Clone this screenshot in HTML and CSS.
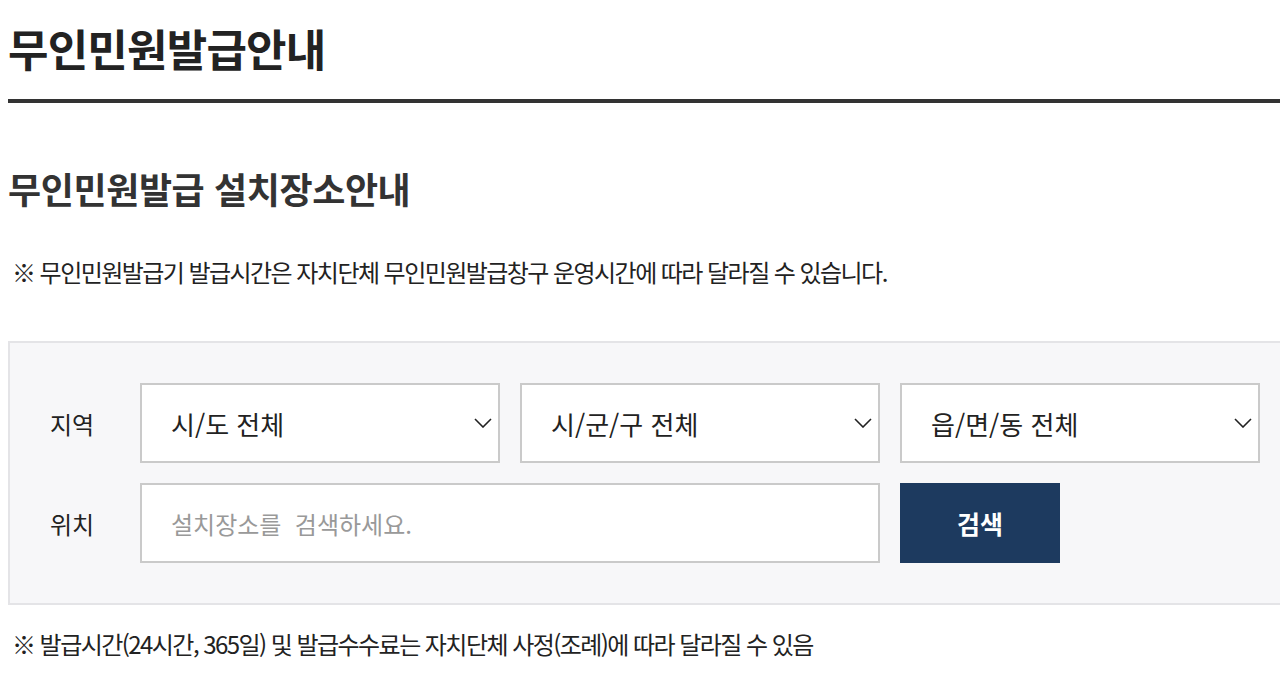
FILE: index.html
```html
<!DOCTYPE html>
<html lang="ko">
<head>
<meta charset="utf-8">
<title>무인민원발급안내</title>
<link rel="stylesheet" href="styles.css">
</head>
<body>
<div class="wrap">
  <h1 class="page-title">무인민원발급안내</h1>
  <h2 class="sub-title">무인민원발급 설치장소안내</h2>
  <p class="notice notice-top">※ 무인민원발급기 발급시간은 자치단체 무인민원발급창구 운영시간에 따라 달라질 수 있습니다.</p>
  <div class="search-panel">
    <div class="search-row">
      <span class="label">지역</span>
      <div class="select">
        <span>시/도 전체</span>
        <svg class="chev" viewBox="0 0 18 10" width="18" height="10"><path d="M1 1l8 8 8-8" fill="none" stroke="#222" stroke-width="1.6"/></svg>
      </div>
      <div class="select">
        <span>시/군/구 전체</span>
        <svg class="chev" viewBox="0 0 18 10" width="18" height="10"><path d="M1 1l8 8 8-8" fill="none" stroke="#222" stroke-width="1.6"/></svg>
      </div>
      <div class="select">
        <span>읍/면/동 전체</span>
        <svg class="chev" viewBox="0 0 18 10" width="18" height="10"><path d="M1 1l8 8 8-8" fill="none" stroke="#222" stroke-width="1.6"/></svg>
      </div>
    </div>
    <div class="search-row">
      <span class="label">위치</span>
      <div class="input"><span class="placeholder">설치장소를&nbsp; 검색하세요.</span></div>
      <button class="btn-search" type="button">검색</button>
    </div>
  </div>
  <p class="notice notice-bottom">※ 발급시간(24시간, 365일) 및 발급수수료는 자치단체 사정(조례)에 따라 달라질 수 있음</p>
</div>
</body>
</html>
```

FILE: styles.css
```css
html, body {
  overflow: hidden;
}
body {
  margin: 0 0 0 8px;
  background: #fff;
  font-family: "Noto Sans CJK KR", "Noto Sans", sans-serif;
  color: #222;
}
.wrap {
  width: 1294px;
}
.page-title {
  margin: 0;
  padding: 18px 0 21px;
  font-size: 44px;
  line-height: 60px;
  font-weight: 700;
  letter-spacing: -0.8px;
  color: #222;
  border-bottom: 4px solid #333;
}
.sub-title {
  margin: 0;
  padding-top: 60px;
  font-size: 36px;
  line-height: 50px;
  font-weight: 700;
  letter-spacing: -0.4px;
  color: #333;
}
.notice {
  margin: 0;
  font-size: 24px;
  line-height: 34px;
  letter-spacing: -1.55px;
  color: #222;
}
.notice-top {
  padding: 42px 0 0 4px;
}
.notice-bottom {
  padding: 22px 0 0 4px;
}
.search-panel {
  margin-top: 52px;
  border: 2px solid #e4e4e7;
  background: #f7f7f9;
  padding: 40px;
  display: flex;
  flex-direction: column;
  gap: 20px;
}
.search-row {
  display: flex;
  align-items: center;
  gap: 20px;
}
.label {
  width: 70px;
  font-size: 24px;
  color: #222;
}
.select, .input {
  box-sizing: border-box;
  height: 80px;
  border: 2px solid #cacaca;
  background: #fff;
  display: flex;
  align-items: center;
  padding: 0 6px 0 29px;
  font-size: 26px;
  color: #222;
}
.select {
  width: 360px;
  justify-content: space-between;
}
.input {
  width: 740px;
}
.placeholder {
  font-size: 24px;
  color: #999;
}
.chev {
  display: block;
}
.btn-search {
  width: 160px;
  height: 80px;
  border: 0;
  background: #1d3a5f;
  color: #fff;
  font-family: inherit;
  font-size: 25px;
  font-weight: 700;
}
```
